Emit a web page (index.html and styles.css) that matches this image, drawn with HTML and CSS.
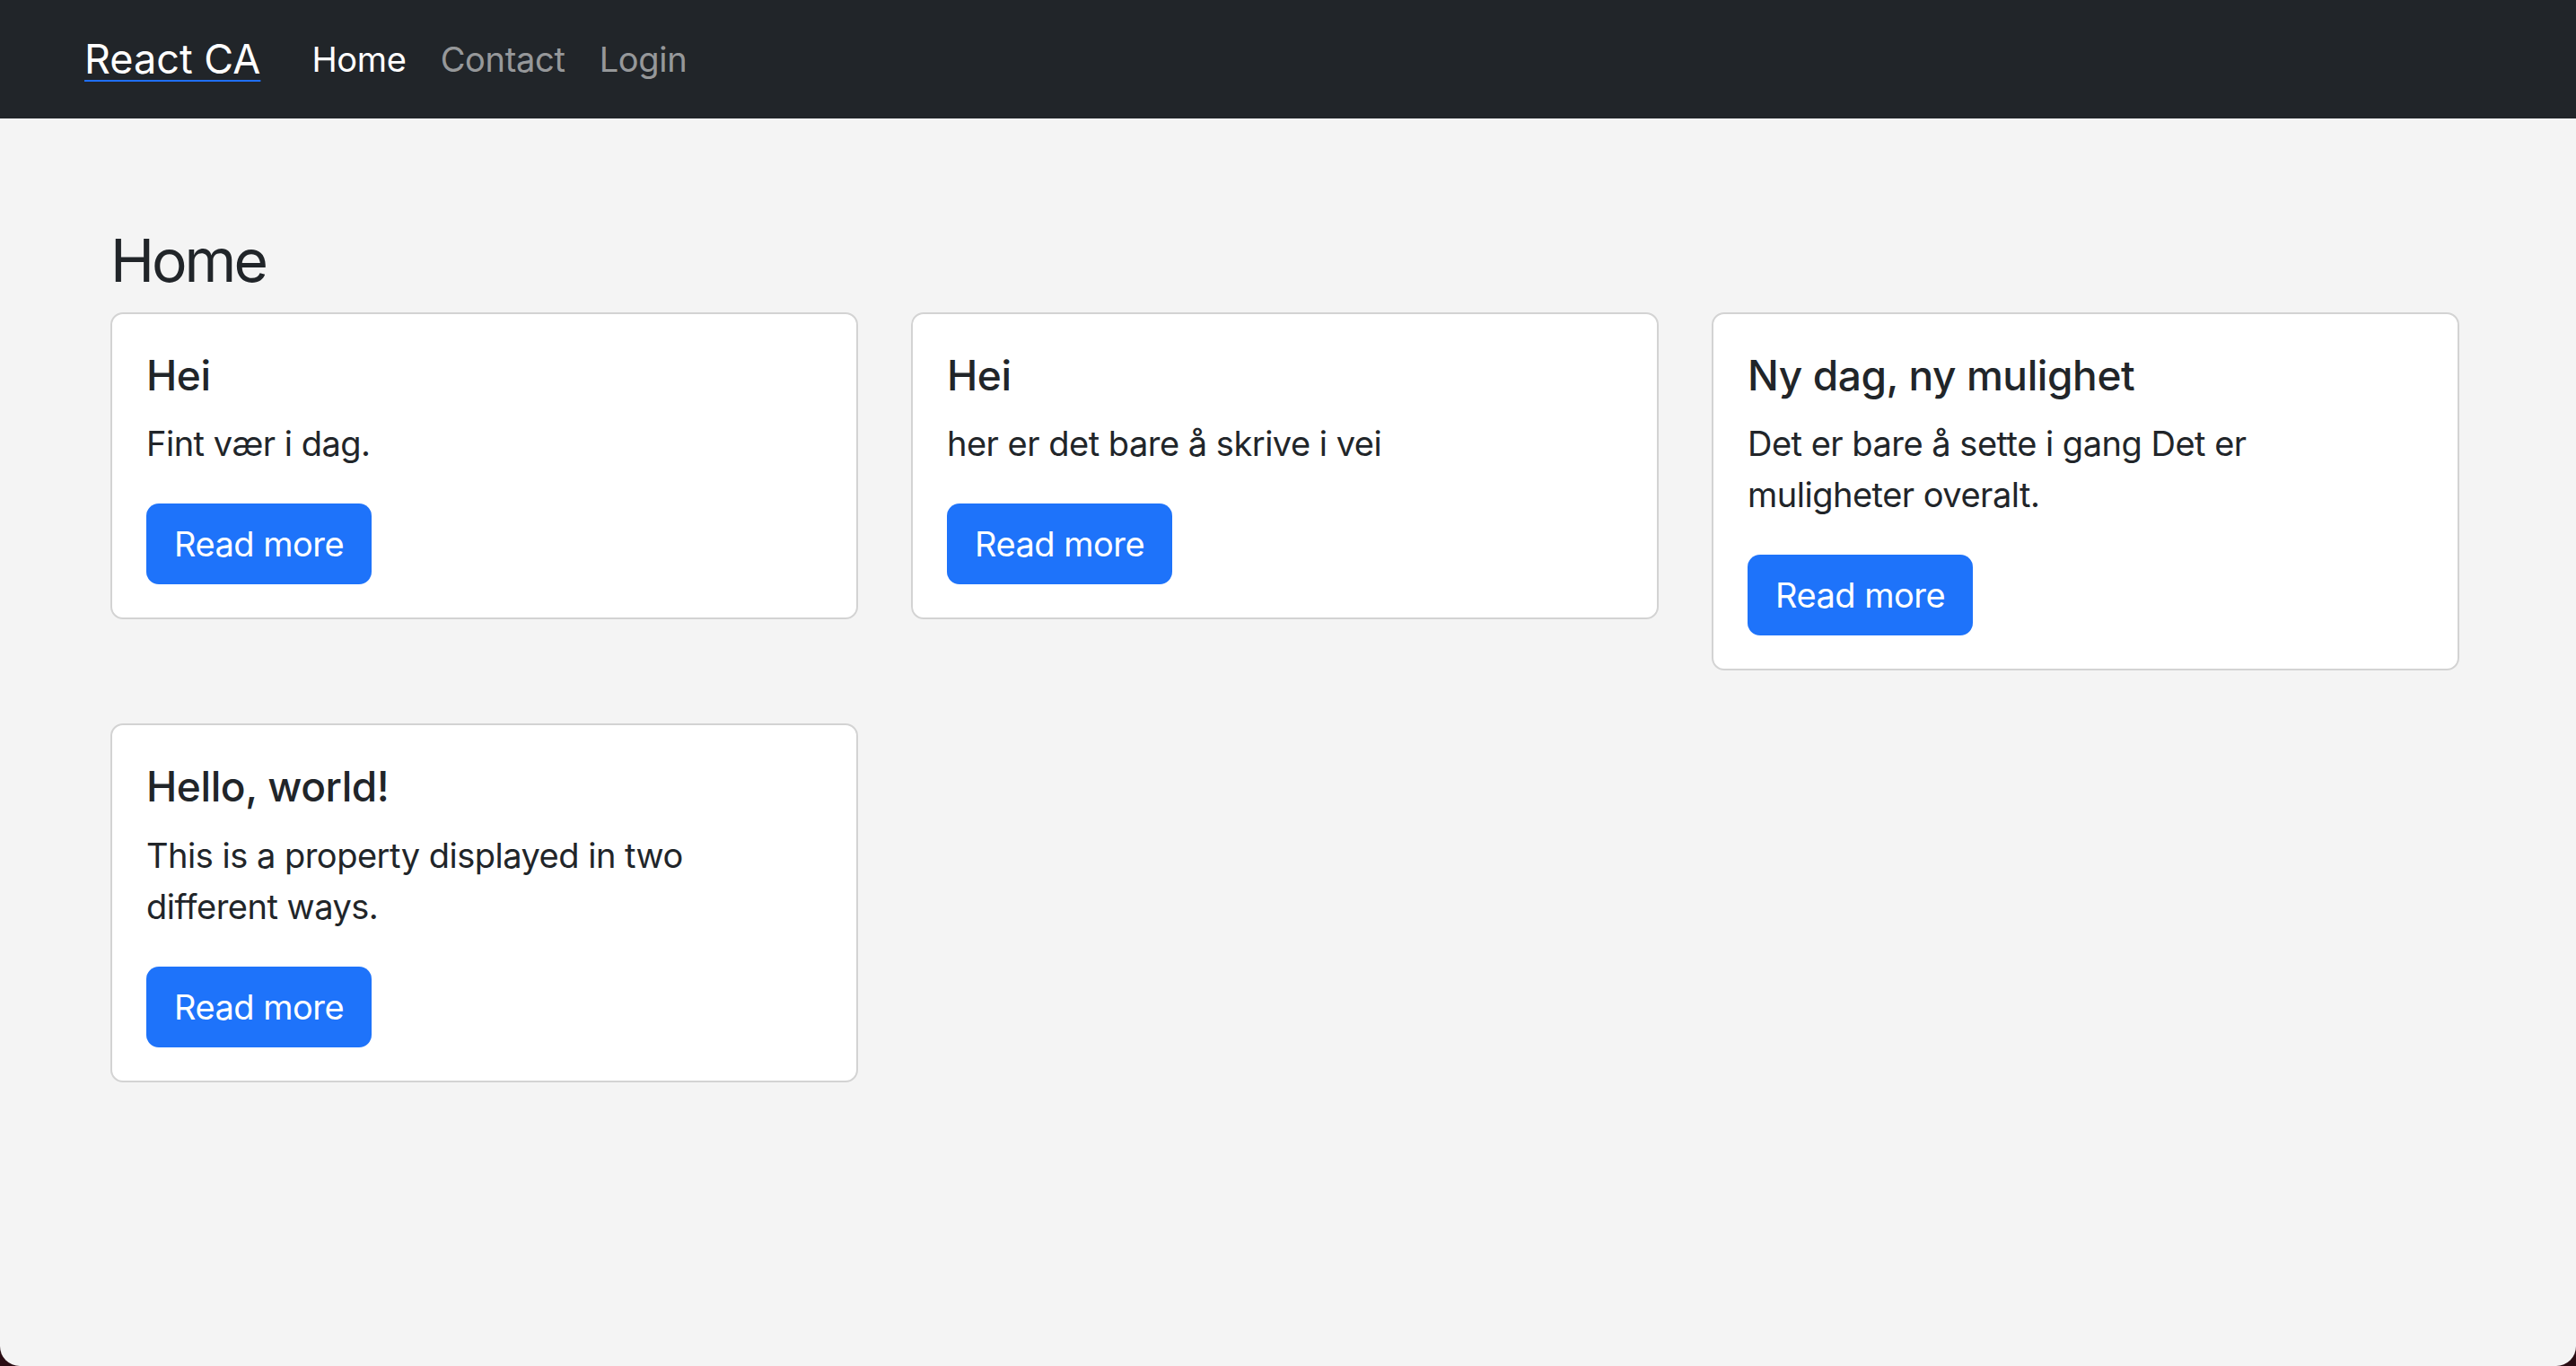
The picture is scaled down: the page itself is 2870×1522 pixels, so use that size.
FILE: index.html
```html
<!DOCTYPE html>
<html lang="no">
<head>
<meta charset="utf-8">
<title>React CA</title>
<link rel="stylesheet" href="styles.css">
</head>
<body>
<nav class="navbar">
  <a class="brand" href="#">React CA</a>
  <ul class="nav-links">
    <li><a class="nav-link active" href="#">Home</a></li>
    <li><a class="nav-link" href="#">Contact</a></li>
    <li><a class="nav-link" href="#">Login</a></li>
  </ul>
</nav>
<main class="container">
  <h2 class="page-title">Home</h2>
  <div class="card-grid">
    <div class="card">
      <h5 class="card-title">Hei</h5>
      <p class="card-text">Fint vær i dag.</p>
      <a class="btn" href="#">Read more</a>
    </div>
    <div class="card">
      <h5 class="card-title">Hei</h5>
      <p class="card-text">her er det bare å skrive i vei</p>
      <a class="btn" href="#">Read more</a>
    </div>
    <div class="card">
      <h5 class="card-title">Ny dag, ny mulighet</h5>
      <p class="card-text">Det er bare å sette i gang Det er muligheter overalt.</p>
      <a class="btn" href="#">Read more</a>
    </div>
    <div class="card">
      <h5 class="card-title">Hello, world!</h5>
      <p class="card-text">This is a property displayed in two different ways.</p>
      <a class="btn" href="#">Read more</a>
    </div>
  </div>
</main>
</body>
</html>
```
FILE: styles.css
```css
html {
  background: #2a0d14;
}
body {
  margin: 0;
  min-height: 100vh;
  background: #f4f4f4;
  color: #212529;
  font-family: Inter, "Noto Sans", sans-serif;
  font-size: 38px;
  line-height: 1.5;
  letter-spacing: -0.5px;
  border-radius: 0 0 22px 22px;
  overflow: hidden;
}
.navbar {
  height: 132px;
  background: #212529;
  display: flex;
  align-items: center;
  padding-left: 94px;
}
.brand {
  font-size: 45px;
  line-height: 1.5;
  letter-spacing: 0;
  color: #fff;
  text-decoration: underline;
  text-decoration-color: #1f6ff8;
  text-decoration-thickness: 2px;
  text-underline-offset: 7px;
  margin-right: 38px;
}
.nav-links {
  display: flex;
  list-style: none;
  margin: 0;
  padding: 0;
}
.nav-link {
  display: block;
  padding: 0 19px;
  letter-spacing: -0.3px;
  color: rgba(255, 255, 255, 0.55);
  text-decoration: none;
}
.nav-link.active {
  color: #fff;
}
.container {
  padding: 119px 0 0 123px;
}
.page-title {
  margin: 0 0 18px;
  font-size: 66px;
  line-height: 1.2;
  font-weight: 400;
  letter-spacing: -3px;
}
.card-grid {
  display: grid;
  grid-template-columns: repeat(3, 833px);
  gap: 59px;
  align-items: start;
}
.card {
  background: #fff;
  border: 2px solid #d3d3d3;
  border-radius: 14px;
  padding: 41px 39px 37px 38px;
}
.card-title {
  margin: 0 0 20px;
  font-size: 46px;
  line-height: 1.2;
  font-weight: 500;
  letter-spacing: -0.4px;
}
.card-text {
  margin: 0 0 38px;
  max-width: 720px;
}
.btn {
  display: inline-block;
  background: #1e73fa;
  color: #fff;
  text-decoration: none;
  line-height: 58px;
  padding: 16px 31px;
  border-radius: 14px;
}
```
